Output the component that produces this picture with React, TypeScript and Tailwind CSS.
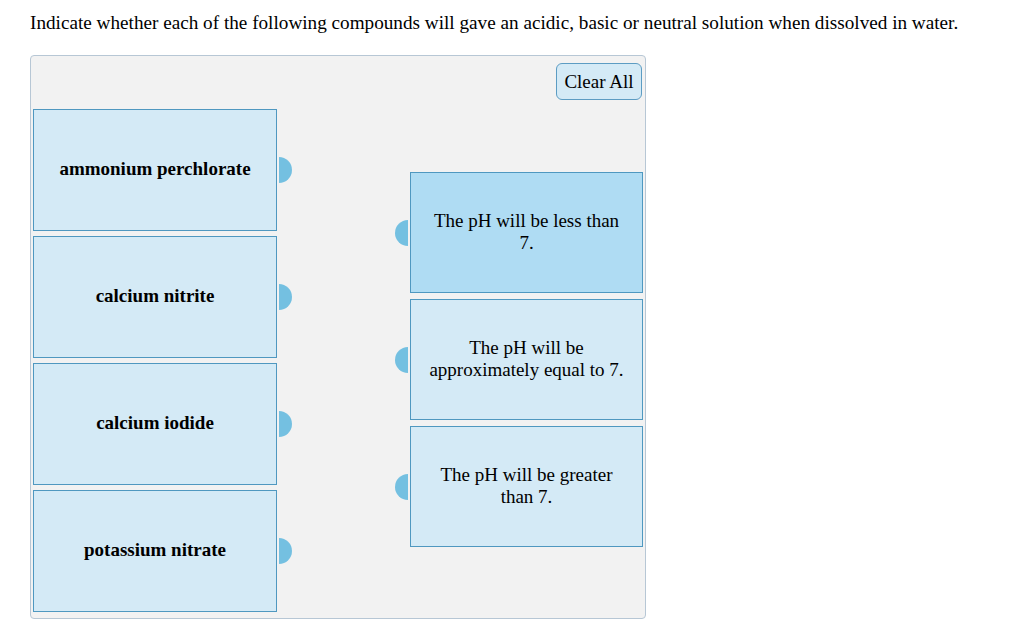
import React from "react";

const compounds = [
  "ammonium perchlorate",
  "calcium nitrite",
  "calcium iodide",
  "potassium nitrate",
];

const outcomes = [
  { text: "The pH will be less than 7.", active: true },
  { text: "The pH will be approximately equal to 7.", active: false },
  { text: "The pH will be greater than 7.", active: false },
];

function Knob({ side }: { side: "left" | "right" }) {
  return (
    <div
      className={
        side === "right"
          ? "w-[13px] h-[26px] bg-[#74c0e1] rounded-r-full shrink-0"
          : "w-[13px] h-[26px] bg-[#74c0e1] rounded-l-full shrink-0"
      }
    />
  );
}

export default function App() {
  return (
    <div
      className="bg-white min-h-[638px] text-black pl-[30px] pt-[12px]"
      style={{ fontFamily: '"Liberation Serif", "Times New Roman", serif' }}
    >
      <p className="text-[19.2px] leading-[22px] whitespace-nowrap">
        Indicate whether each of the following compounds will gave an acidic, basic or neutral solution when dissolved in water.
      </p>
      <div className="mt-[21px] w-[616px] h-[564px] border border-[#b7c7d5] rounded-[4px] bg-[#f2f2f2] flex flex-col">
        <div className="flex justify-end pt-[7px] pr-[3px]">
          <button className="w-[86px] h-[37px] rounded-[6px] border border-[#5c9cc3] bg-[#d4eaf6] text-[19px] leading-none text-black">
            Clear All
          </button>
        </div>
        <div className="flex justify-between px-[2px] mt-[9px]">
          <div className="flex flex-col gap-[5px]">
            {compounds.map((c) => (
              <div key={c} className="flex items-center gap-[2px]">
                <div className="w-[244px] h-[122px] border border-[#4f98c0] bg-[#d4eaf6] flex items-center justify-center text-center font-bold text-[19px] leading-[22px] px-2 pb-[2px]">
                  {c}
                </div>
                <Knob side="right" />
              </div>
            ))}
          </div>
          <div className="flex flex-col gap-[6px] mt-[63px]">
            {outcomes.map((o) => (
              <div key={o.text} className="flex items-center gap-[2px]">
                <Knob side="left" />
                <div
                  className={
                    o.active
                      ? "w-[233px] h-[121px] border border-[#4f98c0] bg-[#afdcf3] flex items-center justify-center text-center text-[19px] leading-[22px] px-[15px] pb-[2px]"
                      : "w-[233px] h-[121px] border border-[#4f98c0] bg-[#d4eaf6] flex items-center justify-center text-center text-[19px] leading-[22px] px-[15px] pb-[2px]"
                  }
                >
                  {o.text}
                </div>
              </div>
            ))}
          </div>
        </div>
      </div>
    </div>
  );
}
